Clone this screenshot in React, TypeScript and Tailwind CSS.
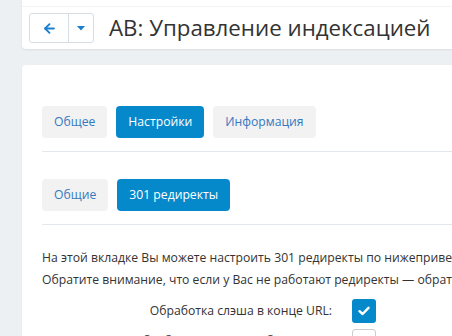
import { ArrowLeft } from "lucide-react";

const font = { fontFamily: '"Open Sans", "Liberation Sans", sans-serif' };

function Tab({ label, active }: { label: string; active?: boolean }) {
  return (
    <button
      className={
        active
          ? "h-8 rounded-[4px] bg-[#0589cb] px-[12px] text-[12.2px] text-white"
          : "h-8 rounded-[4px] bg-[#f2f2f3] px-[12px] text-[12.2px] text-[#3479c0]"
      }
    >
      {label}
    </button>
  );
}

function App() {
  return (
    <div
      className="flex h-[336px] w-[452px] flex-col overflow-hidden bg-[#edf0f2] text-[#333]"
      style={font}
    >
      <div className="ml-[22px] h-[49px] shrink-0 rounded-bl-[4px] bg-white shadow-[0_1px_2px_rgba(0,0,0,0.08)]">
        <div className="mt-[6px] border-t border-[#f1f3f5]" />
        <div className="flex items-center pl-[7px] pt-[6px]">
          <div className="flex h-[30px] rounded-[3px] border border-[#d6dde3] bg-white">
            <div className="flex w-[39px] items-center justify-center border-r border-[#d6dde3]">
              <ArrowLeft size={15} strokeWidth={3} className="text-[#1a7fd0]" />
            </div>
            <div className="flex w-[24px] items-center justify-center">
              <svg width="8" height="5" viewBox="0 0 8 5">
                <path d="M0 0h8L4 4.5z" fill="#1a7fd0" />
              </svg>
            </div>
          </div>
          <h1 className="ml-[15px] whitespace-nowrap text-[22.3px] leading-none text-[#333]">
            AB: Управление индексацией
          </h1>
        </div>
      </div>

      <div className="ml-[22px] mt-[16px] flex-1 rounded-tl-[4px] bg-white pl-[20px] pt-[41px] shadow-[0_1px_2px_rgba(0,0,0,0.06)]">
        <div className="flex gap-[9px]">
          <Tab label="Общее" />
          <Tab label="Настройки" active />
          <Tab label="Информация" />
        </div>
        <div className="mt-[13px] border-t border-[#e3e8ee]" />

        <div className="mt-[27px] flex gap-[9px]">
          <Tab label="Общие" />
          <Tab label="301 редиректы" active />
        </div>
        <div className="mt-[13px] border-t border-[#e3e8ee]" />

        <div className="mt-[22px] whitespace-nowrap text-[12.2px] leading-[22px] text-[#333]">
          <p>На этой вкладке Вы можете настроить 301 редиректы по нижеприведённым правилам.</p>
          <p>Обратите внимание, что если у Вас не работают редиректы — обратитесь к хостингу.</p>
        </div>

        <div className="mt-[8px] grid grid-cols-[290px_1fr] items-center gap-x-[20px] gap-y-[6px] text-[12.2px]">
          <label className="text-right">Обработка слэша в конце URL:</label>
          <div className="flex h-6 w-6 items-center justify-center rounded-[3px] bg-[#0589cb]">
            <svg width="12" height="10" viewBox="0 0 12 10">
              <path d="M1.5 5.2 4.6 8 10.5 1.8" fill="none" stroke="white" strokeWidth="2.4" strokeLinecap="round" strokeLinejoin="round" />
            </svg>
          </div>
          <label className="text-right">Обработка заглавных букв в URL:</label>
          <div className="h-6 w-6 rounded-[3px] border border-[#ccc]" />
        </div>
      </div>
    </div>
  );
}

export default App;
